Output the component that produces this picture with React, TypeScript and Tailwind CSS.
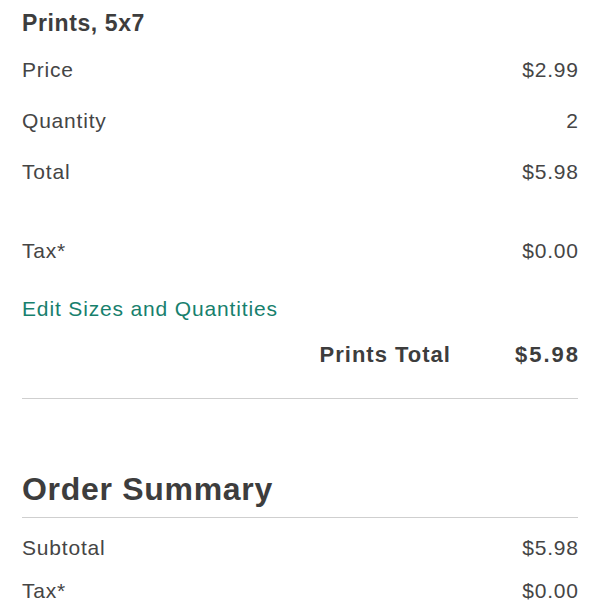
function Row({ label, value, tight }: { label: string; value: string; tight?: boolean }) {
    return (
        <div
            className={
                tight
                    ? "flex justify-between items-center h-[43px] text-[21px] leading-[43px] tracking-[0.8px] text-[#454545]"
                    : "flex justify-between items-center h-[51px] text-[21px] leading-[51px] tracking-[0.8px] text-[#454545]"
            }
        >
            <span>{label}</span>
            <span className="-mr-[0.8px]">{value}</span>
        </div>
    );
}

export default function App() {
    return (
        <div className="w-[600px] h-[600px] overflow-hidden bg-white px-[22px] font-['Liberation_Sans',Arial,sans-serif]">
            <h2 className="pt-2 text-[23px] leading-[30px] font-bold tracking-[0.6px] text-[#3d3d3d]">Prints, 5x7</h2>
            <div className="mt-[6px]">
                <Row label="Price" value="$2.99" />
                <Row label="Quantity" value="2" />
                <Row label="Total" value="$5.98" />
            </div>
            <div className="mt-[28px]">
                <Row label="Tax*" value="$0.00" />
            </div>
            <div className="mt-[7px] h-[51px] text-[21px] leading-[51px] tracking-[0.85px] text-[#17806d]">
                Edit Sizes and Quantities
            </div>
            <div className="mt-px flex justify-end items-center gap-[64px] h-[40px] leading-[40px] text-[22px] font-bold tracking-[1px] text-[#3d3d3d]">
                <span>Prints Total</span>
                <span className="tracking-[2px] -mr-[2px]">$5.98</span>
            </div>
            <div className="mt-[23px] border-t border-[#cfcfcf]" />
            <h2 className="mt-[70px] text-[32px] leading-[40px] font-bold tracking-[0.7px] text-[#3d3d3d]">Order Summary</h2>
            <div className="mt-[8px] border-t border-[#cfcfcf]" />
            <div className="mt-[8px]">
                <Row tight label="Subtotal" value="$5.98" />
                <Row tight label="Tax*" value="$0.00" />
            </div>
        </div>
    );
}
